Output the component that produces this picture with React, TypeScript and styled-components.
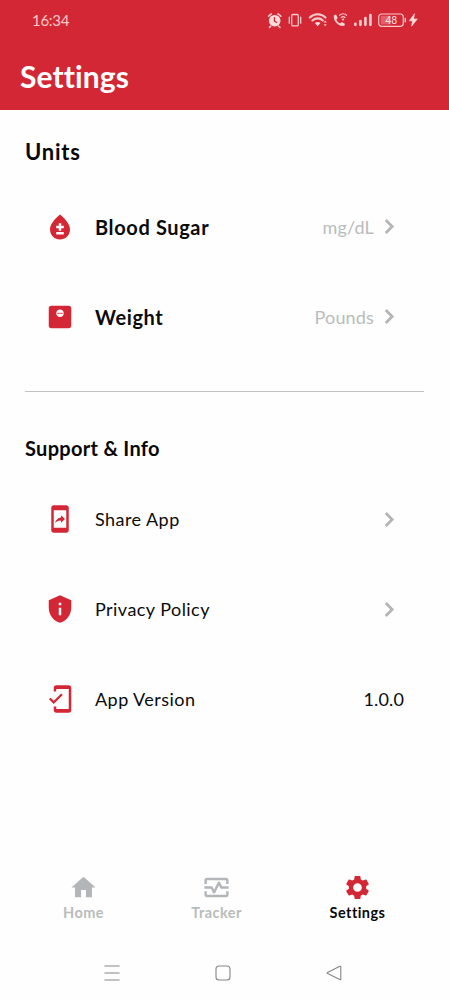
import React from "react";
import styled, { createGlobalStyle } from "styled-components";
import {
  MdBloodtype,
  MdMonitorWeight,
  MdMobileScreenShare,
  MdPrivacyTip,
  MdMobileFriendly,
  MdHome,
  MdOutlineMonitorHeart,
  MdSettings,
} from "react-icons/md";

const GlobalStyle = createGlobalStyle`
  *, *::before, *::after { box-sizing: border-box; }
  body { margin: 0; background: #fefefe; font-family: Lato, "Liberation Sans", sans-serif; }
  svg { display: block; flex: none; }
`;

const red = "#d32735";
const grey = "#b2b6b9";

const Screen = styled.div`
  width: 100%;
  height: 1000px;
  display: flex;
  flex-direction: column;
  background: #fefefe;
  color: #080808;
  overflow: hidden;
`;

const Header = styled.header`
  height: 109.5px;
  background: #d42735;
  flex: none;
`;

const StatusBar = styled.div`
  height: 40px;
  padding: 0 30px 0 32px;
  display: flex;
  align-items: center;
  justify-content: space-between;
  color: #fbc9c8;
`;

const Clock = styled.span`
  font-size: 15px;
  line-height: 20px;
  letter-spacing: -0.3px;
`;

const Title = styled.h1`
  margin: 18px 0 0 20px;
  font-size: 30px;
  line-height: 36px;
  font-weight: 700;
  font-variant-ligatures: none;
  letter-spacing: 0.1px;
  color: #fff;
`;

const Content = styled.main`
  flex: 1;
  padding: 0 25px;
`;

const SectionTitle = styled.h2<{ $size: number; $top: number; $spacing: number }>`
  margin: 0;
  padding-top: ${(p) => p.$top}px;
  font-size: ${(p) => p.$size}px;
  letter-spacing: ${(p) => p.$spacing}px;
  line-height: 28px;
  font-weight: 700;
`;

const List = styled.div<{ $top: number }>`
  padding: ${(p) => p.$top}px 20px 0;
`;

const Row = styled.div`
  height: 89.8px;
  display: flex;
  align-items: center;
  color: ${red};
`;

const Label = styled.span<{ $bold?: boolean }>`
  margin-left: 20px;
  flex: 1;
  color: #0b0b0b;
  font-size: ${(p) => (p.$bold ? 20 : 18)}px;
  font-weight: ${(p) => (p.$bold ? 700 : 400)};
  letter-spacing: ${(p) => (p.$bold ? 0.62 : 0.45)}px;
`;

const Value = styled.span<{ $dark?: boolean }>`
  color: ${(p) => (p.$dark ? "#0b0b0b" : "#b9bcbc")};
  font-size: 18px;
  letter-spacing: 0.15px;
`;

const Divider = styled.hr`
  height: 1px;
  margin: 29.5px 0 0;
  border: 0;
  background: #c2c2c2;
`;

const TabBar = styled.nav`
  height: 71px;
  padding: 0 24px 0 16px;
  display: grid;
  grid-template-columns: 135px 131px 151px;
`;

const Tab = styled.div<{ $active?: boolean }>`
  display: flex;
  flex-direction: column;
  align-items: center;
  color: ${(p) => (p.$active ? red : grey)};
`;

const TabLabel = styled.span<{ $active?: boolean }>`
  margin-top: 2px;
  font-size: 14.5px;
  line-height: 18px;
  font-weight: 700;
  font-variant-ligatures: none;
  letter-spacing: 0.45px;
  color: ${(p) => (p.$active ? "#080808" : "#b8bcbd")};
`;

const SystemBar = styled.div`
  height: 56px;
  padding: 1px 107px 0 104px;
  display: flex;
  align-items: center;
  justify-content: space-between;
`;

const Chevron = () => (
  <svg width="29" height="29" viewBox="0 0 24 24" fill="none" stroke="#b5b5b5" strokeWidth="2.3">
    <path d="M8.900 6.700L14.200 12l-5.300 5.300" />
  </svg>
);

const StatusIcons = () => (
  <svg width="152" height="20" viewBox="267 10 152 20" fill="none" stroke="#fbc9c8" strokeLinecap="round" strokeLinejoin="round">
    <circle cx="274.7" cy="20.7" r="5.8" fill="#ffdcda" stroke="none" />
    <path d="M268.6 16.2l2.8-2.3M280.8 16.2l-2.8-2.3M270.8 26l-1.3 1.4M278.6 26l1.3 1.4" strokeWidth="1.6" />
    <path d="M274.4 17.7v3.4l2.3 1.4" stroke="#d42735" strokeWidth="1.3" />
    <rect x="291.7" y="14.5" width="6.6" height="11.4" rx="1.2" strokeWidth="1.3" />
    <path d="M289.3 17.2v6M300.7 17.2v6" strokeWidth="1.3" />
    <path d="M309.8 17.6c4.3-4.4 11.4-4.4 15.7 0M312.4 20.5c2.9-2.9 7.6-2.9 10.4 0" strokeWidth="2.1" />
    <path d="M314.8 23c1.6-1.5 4.1-1.5 5.700 0l-2.800 3.200z" fill="#ffdcda" stroke="none" />
    <path d="M325.2 20.4l1.7 2h-3.4zM325.2 26.2l-1.7-2h3.4z" fill="#ffc1bf" stroke="none" />
    <path d="M334 15.2l2-.6 1.7 3.5-1.4 1.6c.8 1.8 2 3 3.8 3.8l1.5-1.5 3.3 1.7-.5 2.1c-5.6 1.5-12-5.6-10.400-10.600z" fill="#ffd4d2" stroke="none" />
    <path d="M339.6 15.3c2.1-1.9 5.1-1.9 7 0M341.3 17.5c1.1-1 2.6-1 3.6 0" strokeWidth="1.2" />
    <circle cx="343.1" cy="19.6" r="1" fill="#ffd4d2" stroke="none" />
    <path d="M355.4 23.800v1M360.400 21v3.800M365.400 18v6.800M370.400 15v9.800" strokeWidth="2.700" />
    <rect x="378.7" y="14" width="24.6" height="12.3" rx="3.3" strokeWidth="1.2" />
    <path d="M380.700 17c0-.8.5-1.300 1.300-1.300h9v8.900h-9c-.8 0-1.300-.5-1.300-1.300z" fill="#ee8388" stroke="none" opacity=".6" />
    <path d="M405.3 18.6v3.2" strokeWidth="1.5" />
    <text x="391.2" y="24" textAnchor="middle" fontFamily="Roboto, sans-serif" fontSize="10.5" fill="#ffe0de" stroke="none">48</text>
    <path d="M414.300 14l-5 6.800h3.300l-1 5.400 5.700-7.200h-3.500z" fill="#ffe0de" stroke="#ffe0de" strokeWidth=".6" />
  </svg>
);

const unitRows = [
  { label: "Blood Sugar", value: "mg/dL", Icon: MdBloodtype },
  { label: "Weight", value: "Pounds", Icon: MdMonitorWeight },
];

const infoRows = [
  { label: "Share App", Icon: MdMobileScreenShare },
  { label: "Privacy Policy", Icon: MdPrivacyTip },
  { label: "App Version", value: "1.0.0", Icon: MdMobileFriendly },
];

const tabs = [
  { label: "Home", Icon: MdHome },
  { label: "Tracker", Icon: MdOutlineMonitorHeart },
  { label: "Settings", Icon: MdSettings, active: true },
];

const Trailing = styled.div`
  display: flex;
  align-items: center;
  gap: 1px;
`;

export default function App() {
  return (
    <Screen>
      <GlobalStyle />
      <Header>
        <StatusBar>
          <Clock>16:34</Clock>
          <StatusIcons />
        </StatusBar>
        <Title>Settings</Title>
      </Header>
      <Content>
        <SectionTitle $size={22} $top={28} $spacing={0.8}>Units</SectionTitle>
        <List $top={16.5}>
          {unitRows.map(({ label, value, Icon }) => (
            <Row key={label}>
              <Icon size={30} />
              <Label $bold>{label}</Label>
              <Trailing>
                <Value>{value}</Value>
                <Chevron />
              </Trailing>
            </Row>
          ))}
        </List>
        <Divider />
        <SectionTitle $size={20} $top={42} $spacing={0.3}>Support &amp; Info</SectionTitle>
        <List $top={12.5}>
          {infoRows.map(({ label, value, Icon }) => (
            <Row key={label}>
              <Icon size={30} />
              <Label>{label}</Label>
              <Trailing>
                {value ? <Value $dark>{value}</Value> : <Chevron />}
              </Trailing>
            </Row>
          ))}
        </List>
      </Content>
      <TabBar>
        {tabs.map(({ label, Icon, active }) => (
          <Tab key={label} $active={active}>
            <Icon size={29} />
            <TabLabel $active={active}>{label}</TabLabel>
          </Tab>
        ))}
      </TabBar>
      <SystemBar>
        <svg width="16" height="16" viewBox="0 0 16 16" stroke="#858585" strokeWidth="1.1">
          <path d="M.5 1h15M.5 8h15M.5 15h15" />
        </svg>
        <svg width="16" height="16" viewBox="0 0 16 16" fill="none" stroke="#858585" strokeWidth="1.1">
          <rect x="1" y="1" width="14" height="14" rx="3" />
        </svg>
        <svg width="16" height="16" viewBox="0 0 16 16" fill="none" stroke="#858585" strokeWidth="1.1" strokeLinejoin="round">
          <path d="M13.8 1.3q1-.4 1 .7v12q0 1.1-1 .6L1.6 8.6q-1-.6 0-1.2z" />
        </svg>
      </SystemBar>
    </Screen>
  );
}
